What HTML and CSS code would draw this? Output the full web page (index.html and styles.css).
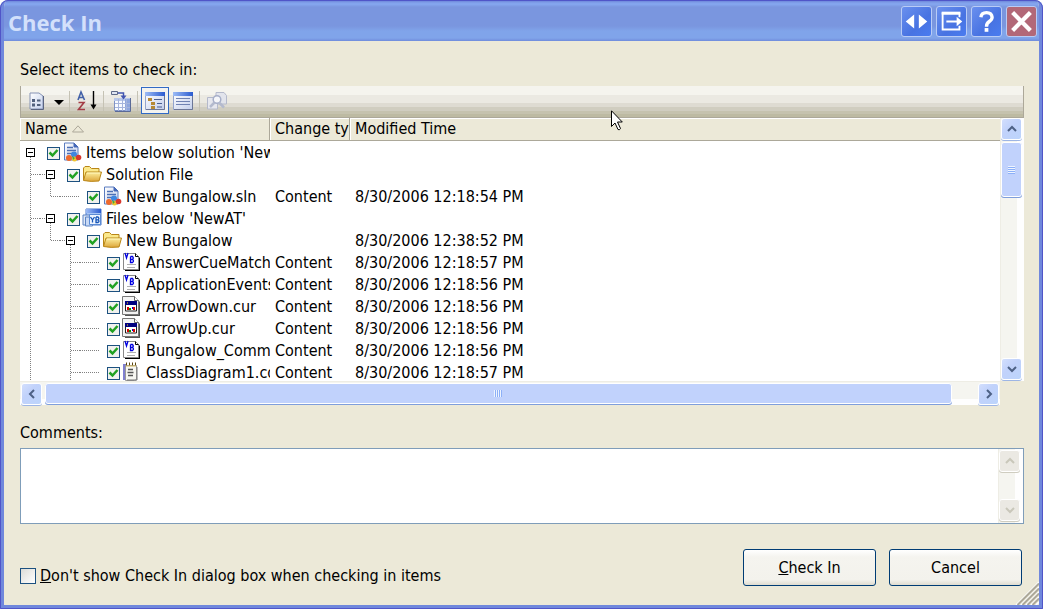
FILE: index.html
```html
<!DOCTYPE html>
<html lang="en">
<head>
<meta charset="utf-8">
<title>Check In</title>
<link rel="stylesheet" href="styles.css">
</head>
<body>
<svg class="sprite" aria-hidden="true">
  <defs>
    <linearGradient id="sheet" x1="0" y1="0" x2="1" y2="1"><stop offset="0" stop-color="#fff"/><stop offset="1" stop-color="#c3cfec"/></linearGradient>
    <linearGradient id="gold" x1="0" y1="0" x2="0" y2="1"><stop offset="0" stop-color="#fdf0a0"/><stop offset="1" stop-color="#dda63a"/></linearGradient>
    <linearGradient id="bluebar" x1="0" y1="0" x2="1" y2="0"><stop offset="0" stop-color="#9dbcf5"/><stop offset="1" stop-color="#2a5bd0"/></linearGradient>
    <symbol id="g-v" viewBox="0 0 20 22"><path class="dots" d="M10.5 0V22"/></symbol>
    <symbol id="g-tee" viewBox="0 0 20 22"><path class="dots" d="M10.5 0V22M11 11.5H20"/></symbol>
    <symbol id="g-elbow" viewBox="0 0 20 22"><path class="dots" d="M10.5 0V12M11 11.5H20"/></symbol>
    <symbol id="g-h" viewBox="0 0 20 22"><path class="dots" d="M0 11.5H20"/></symbol>
    <symbol id="g-root" viewBox="0 0 20 22"><path class="dots" d="M10.5 16V22"/><path d="M6.5 7.5h8v8h-8z" fill="#fff" stroke="#000"/><path d="M8 11.5h5" stroke="#000"/></symbol>
    <symbol id="g-open" viewBox="0 0 20 22"><path class="dots" d="M10.5 16V22M0 11.5H6"/><path d="M6.5 7.5h8v8h-8z" fill="#fff" stroke="#000"/><path d="M8 11.5h5" stroke="#000"/></symbol>
    <symbol id="i-solution" viewBox="0 0 20 20">
      <path d="M2.500 1H12l4 4v13H2.500z" fill="url(#sheet)" stroke="#5a7cc0"/><path d="M12 1v4h4z" fill="#4468b8" stroke="#4468b8"/>
      <path d="M5 5.500h6M5 8.500h9M5 11.500h6" stroke="#4c6fb5" stroke-width="1.500"/>
      <circle cx="12" cy="12.500" r="3" fill="#3f86e0"/><circle cx="7" cy="16" r="3" fill="#ef6a2c"/><circle cx="12.500" cy="17" r="2.500" fill="#f2c52d"/><circle cx="16.500" cy="15.500" r="2.800" fill="#d8382e"/><path d="M10 14l3 2-2 2z" fill="#45a743"/>
    </symbol>
    <symbol id="i-folder" viewBox="0 0 20 20"><path d="M1.500 16V4L3 2.500h4.500l2 2H17v4" fill="#fbe98c" stroke="#b98618"/><path d="M1.500 16.500L4 8h15.500l-2.500 9q-8 1-15.500-.5z" fill="url(#gold)" stroke="#b98618"/><path d="M5 9h13" stroke="#fff6bd"/></symbol>
    <symbol id="i-project" viewBox="0 0 20 20"><path d="M4 1h15v16H4z" fill="#a9c6f5" stroke="#4b79cc"/><path d="M4 1h15v4H4z" fill="url(#bluebar)"/><path d="M1 7h7v10H1z" fill="#e1e9f7" stroke="#5c84c4"/><path d="M3.500 9h7v9h-7z" fill="#c8d9f5" stroke="#5c84c4"/><path d="M7.500 6.500h11v10h-11z" fill="#eef5ff" stroke="#5a8ad4"/><path d="M8.500 9l2 3v2.500M12.500 9l-2 3M14 9v5.500h2q2-1.300 0-2.700h-2M16 11.800q1.700-1.400 0-2.800h-2" fill="none" stroke="#1756b8" stroke-width="1.300"/></symbol>
    <symbol id="i-vb" viewBox="0 0 20 20"><path d="M3 3h12l3 3v13H3z" fill="#000"/><path d="M1.500 1.500h12l3 3V17.500h-15z" fill="#fff" stroke="#888"/><path d="M13.500 1.500v3h3" fill="none" stroke="#000"/><path d="M3 1l1.500 5L6 1M8.500 4.500v6h2q2-1.500 0-3h-2M10.500 7.500q1.500-1.500 0-3h-2" fill="none" stroke="#0000e0" stroke-width="1.300"/><path d="M5 12.500h9M5 15.500h8" stroke="#b0b0b0"/></symbol>
    <symbol id="i-cur" viewBox="0 0 20 20"><path d="M3 3h12l3 3v14H3z" fill="#555"/><path d="M.5 .5h12l4 4V18.500H.5z" fill="#f4f4f4" stroke="#777"/><path d="M12.500 .5v4h4" fill="#fff" stroke="#666"/><path d="M3.500 5.500h11v9.500h-11z" fill="#fff" stroke="#222"/><path d="M3 5h12v4H3z" fill="#000080"/><path d="M5 7h1" stroke="#ffd800"/><path d="M5 11h2v3H5z" fill="#d00"/><path d="M7 12h2v2H7z" fill="#009000"/><path d="M11 11h2v3h-2z" fill="#d00"/><path d="M10 11h1v2h-1z" fill="#0000d0"/></symbol>
    <symbol id="i-note" viewBox="0 0 20 20"><path d="M1 2h3v16H1z" fill="#7f7fd0"/><path d="M3.500 3.500h11V17q0 1.500-2 1.500h-9z" fill="#f7f7f2" stroke="#999"/><path d="M15 5v13H5" fill="none" stroke="#777"/><path d="M4 2h1M7 2h1M10 2h1M13 2h1" stroke="#5c4710" stroke-width="3"/><path d="M4 4h10" stroke="#d9bd63"/><path d="M6 7.500h5M5.500 10.500h6M6 13.500h5" stroke="#555" stroke-width="1.400"/></symbol>
  </defs>
</svg>
<main class="dialog">
  <header class="titlebar">
    <h1 class="title">Check In</h1>
    <div class="window-buttons">
      <button class="win-btn" type="button" aria-label="Switch monitor"><svg viewBox="0 0 31 31"><path d="M13 8v15L4 15.500zM18 8l9 7.500-9 7.500z" fill="#fff"/></svg></button>
      <button class="win-btn" type="button" aria-label="Move out"><svg viewBox="0 0 31 31"><path d="M24 11V7H6v17h18v-4" fill="none" stroke="#fff" stroke-width="2"/><path d="M5 5h20v3H5z" fill="#fff"/><path d="M10 14.500h11v-4l6 5-6 5v-4H10z" fill="#fff"/></svg></button>
      <button class="win-btn" type="button" aria-label="Help"><svg viewBox="0 0 31 31"><path d="M9.500 11Q10 6 15.500 6T21.500 11Q21.500 13.500 18.500 15.500T15.500 21" fill="none" stroke="#fff" stroke-width="3.600"/><path d="M13.500 22.500h4v4h-4z" fill="#fff"/></svg></button>
      <button class="win-btn win-close" type="button" aria-label="Close"><svg viewBox="0 0 31 31"><path d="M6 6L25 25M25 6L6 25" stroke="#fff" stroke-width="4.500"/></svg></button>
    </div>
  </header>

  <div class="content">
    <h2 class="caption" id="list-caption">Select items to check in:</h2>

    <div class="toolbar" role="toolbar">
      <button class="tool" type="button" aria-label="Options"><svg viewBox="0 0 22 22"><path d="M4 3h9l4 3v13H4z" fill="url(#sheet)" stroke="#8592b4"/><path d="M17.500 6v13.500H5" fill="none" stroke="#5a6480"/><path d="M6 9h3v3H6zM6 13.500h3v3H6z" fill="#51607e"/><path d="M11 10.500h3.500M11 15h3.500" stroke="#51607e" stroke-width="2"/></svg></button>
      <button class="tool tool-drop" type="button" aria-label="More options"><svg viewBox="0 0 14 22"><path d="M2 10h10l-5 5z" fill="#000"/></svg></button>
      <span class="divider"></span>
      <button class="tool" type="button" aria-label="Sort"><svg viewBox="0 0 22 22"><path d="M2 10L5 2l3.500 8M3 7.500h4.500" fill="none" stroke="#4361a8" stroke-width="1.600"/><path d="M2.500 12.500H8L2.500 19.500H9" fill="none" stroke="#a33c45" stroke-width="1.600"/><path d="M17.500 1v16" stroke="#000" stroke-width="1.400"/><path d="M14.500 14.500h6l-3 5z" fill="#000"/></svg></button>
      <span class="divider"></span>
      <button class="tool" type="button" aria-label="Show columns"><svg viewBox="0 0 22 22"><path d="M4.500 8.500h15v12h-15z" fill="#f8faff" stroke="#7f92c4"/><path d="M4 8h16v3H4z" fill="#b9c8ea"/><path d="M15 9h5v12h-5z" fill="#8ea6dd"/><path d="M5 13.500h15M5 17.500h15M8.500 9v12M12.500 9v12M16.500 9v12" stroke="#a5b4dc"/><path d="M20.500 8v13.500H5" fill="none" stroke="#5a6a98"/><path d="M1.500 1.500h6v3h-6z" fill="#dfe5f2" stroke="#5f6a88"/><path d="M8 3h5.500v4" fill="none" stroke="#4255b0" stroke-width="1.500"/><path d="M10.500 5.500h6l-3 4z" fill="#4255b0"/></svg></button>
      <span class="divider"></span>
      <button class="tool tool-on" type="button" aria-label="Tree view" aria-pressed="true"><svg viewBox="0 0 22 22"><path d="M1.500 2.500h19v17h-19z" fill="url(#sheet)" stroke="#93a5ce"/><path d="M1 2h20v4H1z" fill="url(#bluebar)"/><path d="M4 8h4v3H4zM7 12h4v3H7zM7 16h4v3H7z" fill="#b68a35"/><path d="M10 9.500h8M13 13.500h5M13 17h5" stroke="#4a5f92"/><path d="M20.500 6v13.500H2" fill="none" stroke="#6c7797"/></svg></button>
      <button class="tool" type="button" aria-label="Flat view"><svg viewBox="0 0 22 22"><path d="M1.500 2.500h19v17h-19z" fill="url(#sheet)" stroke="#93a5ce"/><path d="M1 2h20v4H1z" fill="url(#bluebar)"/><path d="M4 8.500h14M4 11.500h14M4 14.500h14" stroke="#6f82b2"/><path d="M20.500 6v13.500H2" fill="none" stroke="#6c7797"/></svg></button>
      <span class="divider"></span>
      <button class="tool" type="button" aria-label="Compare" disabled><svg viewBox="0 0 22 22"><path d="M10 2.500h8l2.500 3V14H10z" fill="#e2e4ec" stroke="#b4b9cb"/><path d="M1.500 7.500h7l3 3V19h-10z" fill="#e6e7ee" stroke="#b4b9cb"/><circle cx="11" cy="9.500" r="3.800" fill="#f5f6fa" stroke="#a6aec8" stroke-width="1.500"/><path d="M8.500 12.500L4 17M13 12.500l5 5" stroke="#b4bace" stroke-width="2.500"/></svg></button>
    </div>

    <div class="list">
      <div class="list-top">
        <div class="list-view">
          <table class="items" aria-labelledby="list-caption">
            <colgroup><col class="col-name"><col class="col-change"><col></colgroup>
            <thead><tr><th>Name <svg class="sort" viewBox="0 0 12 8"><path d="M.5 7L6 .8l5.500 6.200z" fill="none" stroke="#aca899"/></svg></th><th>Change typ</th><th>Modified Time</th></tr></thead>
            <tbody>
              <tr><td><label class="node"><svg class="g"><use href="#g-root"/></svg><input class="tick" type="checkbox" checked><svg class="i"><use href="#i-solution"/></svg><span>Items below solution 'New</span></label></td><td></td><td></td></tr>
              <tr><td><label class="node"><svg class="g"><use href="#g-tee"/></svg><svg class="g"><use href="#g-open"/></svg><input class="tick" type="checkbox" checked><svg class="i"><use href="#i-folder"/></svg><span>Solution File</span></label></td><td></td><td></td></tr>
              <tr><td><label class="node"><svg class="g"><use href="#g-v"/></svg><svg class="g"><use href="#g-elbow"/></svg><svg class="g"><use href="#g-h"/></svg><input class="tick" type="checkbox" checked><svg class="i"><use href="#i-solution"/></svg><span>New Bungalow.sln</span></label></td><td>Content</td><td>8/30/2006 12:18:54 PM</td></tr>
              <tr><td><label class="node"><svg class="g"><use href="#g-tee"/></svg><svg class="g"><use href="#g-open"/></svg><input class="tick" type="checkbox" checked><svg class="i"><use href="#i-project"/></svg><span>Files below 'NewAT'</span></label></td><td></td><td></td></tr>
              <tr><td><label class="node"><svg class="g"><use href="#g-v"/></svg><svg class="g"><use href="#g-elbow"/></svg><svg class="g"><use href="#g-open"/></svg><input class="tick" type="checkbox" checked><svg class="i"><use href="#i-folder"/></svg><span>New Bungalow</span></label></td><td></td><td>8/30/2006 12:38:52 PM</td></tr>
              <tr><td><label class="node"><svg class="g"><use href="#g-v"/></svg><svg class="g"></svg><svg class="g"><use href="#g-tee"/></svg><svg class="g"><use href="#g-h"/></svg><input class="tick" type="checkbox" checked><svg class="i"><use href="#i-vb"/></svg><span>AnswerCueMatchi</span></label></td><td>Content</td><td>8/30/2006 12:18:57 PM</td></tr>
              <tr><td><label class="node"><svg class="g"><use href="#g-v"/></svg><svg class="g"></svg><svg class="g"><use href="#g-tee"/></svg><svg class="g"><use href="#g-h"/></svg><input class="tick" type="checkbox" checked><svg class="i"><use href="#i-vb"/></svg><span>ApplicationEvents</span></label></td><td>Content</td><td>8/30/2006 12:18:56 PM</td></tr>
              <tr><td><label class="node"><svg class="g"><use href="#g-v"/></svg><svg class="g"></svg><svg class="g"><use href="#g-tee"/></svg><svg class="g"><use href="#g-h"/></svg><input class="tick" type="checkbox" checked><svg class="i"><use href="#i-cur"/></svg><span>ArrowDown.cur</span></label></td><td>Content</td><td>8/30/2006 12:18:56 PM</td></tr>
              <tr><td><label class="node"><svg class="g"><use href="#g-v"/></svg><svg class="g"></svg><svg class="g"><use href="#g-tee"/></svg><svg class="g"><use href="#g-h"/></svg><input class="tick" type="checkbox" checked><svg class="i"><use href="#i-cur"/></svg><span>ArrowUp.cur</span></label></td><td>Content</td><td>8/30/2006 12:18:56 PM</td></tr>
              <tr><td><label class="node"><svg class="g"><use href="#g-v"/></svg><svg class="g"></svg><svg class="g"><use href="#g-tee"/></svg><svg class="g"><use href="#g-h"/></svg><input class="tick" type="checkbox" checked><svg class="i"><use href="#i-vb"/></svg><span>Bungalow_Comm</span></label></td><td>Content</td><td>8/30/2006 12:18:56 PM</td></tr>
              <tr><td><label class="node"><svg class="g"><use href="#g-v"/></svg><svg class="g"></svg><svg class="g"><use href="#g-tee"/></svg><svg class="g"><use href="#g-h"/></svg><input class="tick" type="checkbox" checked><svg class="i"><use href="#i-note"/></svg><span>ClassDiagram1.cd</span></label></td><td>Content</td><td>8/30/2006 12:18:57 PM</td></tr>
            </tbody>
          </table>
        </div>
        <div class="vbar">
          <button class="sb-btn" type="button" aria-label="Scroll up"><svg viewBox="0 0 12 12"><path d="M2 8l4-4 4 4"/></svg></button>
          <div class="vthumb"><span class="grip"></span></div>
          <button class="sb-btn sb-end" type="button" aria-label="Scroll down"><svg viewBox="0 0 12 12"><path d="M2 4l4 4 4-4"/></svg></button>
        </div>
      </div>
      <div class="hbar">
        <button class="sb-btn" type="button" aria-label="Scroll left"><svg viewBox="0 0 12 12"><path d="M8 2L4 6l4 4"/></svg></button>
        <div class="htrack"><div class="hthumb"><span class="grip grip-v"></span></div></div>
        <button class="sb-btn" type="button" aria-label="Scroll right"><svg viewBox="0 0 12 12"><path d="M4 2l4 4-4 4"/></svg></button>
      </div>
    </div>

    <label class="caption comments-label" for="comments">Comments:</label>
    <div class="comments">
      <textarea id="comments" class="comments-text"></textarea>
      <div class="vbar vbar-off">
        <button class="sb-btn" type="button" aria-label="Scroll up" disabled><svg viewBox="0 0 12 12"><path d="M2 8l4-4 4 4"/></svg></button>
        <button class="sb-btn sb-end" type="button" aria-label="Scroll down" disabled><svg viewBox="0 0 12 12"><path d="M2 4l4 4 4-4"/></svg></button>
      </div>
    </div>

    <footer class="footer">
      <label class="option"><input class="box" type="checkbox"><span><u>D</u>on't show Check In dialog box when checking in items</span></label>
      <button class="push" type="button"><u>C</u>heck In</button>
      <button class="push" type="button">Cancel</button>
    </footer>
  </div>
  <svg class="resize" viewBox="0 0 24 24"><path d="M1 24L24 1M6 24L24 6M11 24L24 11M16 24L24 16M21 24l3-3" stroke="#fff" stroke-width="1.500"/><path d="M2.500 24L24 2.500M7.500 24L24 7.500M12.500 24L24 12.500M17.500 24L24 17.500" stroke="#aca899" stroke-width="2"/></svg>
  <svg class="pointer" viewBox="0 0 12 21"><path d="M.5 .8V16.500L4 13l3 6.500q1.500 1 2.500-1L6.500 12h4.800z" fill="#fff" stroke="#000"/></svg>
</main>
</body>
</html>
```
FILE: styles.css
```css
* { box-sizing: border-box; }

body {
  margin: 0;
  background: #fff;
  color: #000;
  font: 16px/20px "DejaVu Sans Condensed", "Noto Sans", sans-serif;
}

button, textarea { font: inherit; color: inherit; }
button { padding: 0; margin: 0; }
svg { display: block; }
.sprite { position: absolute; width: 0; height: 0; }

.dialog {
  position: relative;
  display: flex;
  flex-direction: column;
  height: 100vh;
  min-height: 480px;
  border: 4px solid #7088dc;
  border-top: 0;
  border-radius: 8px 8px 0 0;
  background: #ece9d8;
  outline: 1px solid #5055c8;
  outline-offset: -1px;
  overflow: hidden;
}

.titlebar {
  flex: none;
  display: flex;
  align-items: center;
  justify-content: space-between;
  height: 41px;
  margin: 0 -3px;
  padding: 2px 5px 0 7px;
  background: linear-gradient(#5a70d0 0, #7b98e4 2px, #86a8f0 4px, #7a96df 7px, #7a96df 26px, #80a4ea 31px, #80a4ea 38px, #708cdc 41px);
}
.title { margin: 0; font: 700 22px/32px "Open Sans", "Noto Sans", sans-serif; color: #d3e0fb; }
.window-buttons { display: flex; gap: 4px; }
.win-btn {
  width: 31px;
  height: 31px;
  border: 1px solid #b9ccf6;
  border-radius: 3px;
  background: linear-gradient(135deg, #6a90ee, #4873e2 60%, #4a7cf0);
}
.win-btn svg { width: 29px; height: 29px; }
.win-close { background: #b26878; }

.content {
  flex: 1;
  display: flex;
  flex-direction: column;
  min-height: 0;
  padding: 19px 15px 19px 16px;
}
.caption { margin: 0; font-size: 16px; font-weight: normal; line-height: 20px; }

.toolbar {
  flex: none;
  display: flex;
  align-items: center;
  height: 32px;
  margin-top: 6px;
  padding: 0 2px 2px;
  border: solid #aca899;
  border-width: 0 1px 1px;
  background: linear-gradient(#f5f4ee 0 9px, #ebe9e2 9px 17px, #dedbd2 17px 21px, #d0cdc0 21px 25px, #c5c2ae 25px 28px, #bdbaa2 28px);
}
.tool { display: grid; place-items: center; width: 28px; height: 27px; border: 1px solid transparent; background: none; }
.tool svg { width: 22px; height: 22px; }
.tool-drop { width: 16px; }
.tool-drop svg { width: 14px; }
.tool-on { border-color: #316ac5; background: #f3f3f0; }
.divider { width: 1px; height: 20px; margin: 0 3px 0 2px; background: #c5c2b4; }

.list { flex: 1; display: flex; flex-direction: column; min-height: 0; }
.list-top { flex: 1; display: flex; min-height: 0; }
.list-view { flex: 1; min-width: 0; overflow: hidden; background: #fff; }
.items { width: 100%; table-layout: fixed; border-collapse: separate; border-spacing: 0; }
.col-name { width: 250px; }
.col-change { width: 80px; }
.items th {
  height: 23px;
  padding: 0 0 0 5px;
  border-right: 1px solid #aca899;
  border-bottom: 1px solid #aca899;
  background: #ece9d8;
  box-shadow: inset 1px 1px #fff;
  font-weight: normal;
  line-height: 22px;
  text-align: left;
  white-space: nowrap;
  overflow: hidden;
}
.items th:last-child { border-right: 0; }
.sort { display: inline-block; width: 12px; height: 8px; vertical-align: 1px; }
.items td { height: 22px; padding: 2px 0 0 5px; line-height: 20px; white-space: nowrap; overflow: hidden; }
.items td:first-child { padding: 0; }
.node { display: flex; align-items: center; height: 22px; }
.node span { padding-top: 2px; }
.g { flex: none; width: 20px; height: 22px; shape-rendering: crispEdges; }
.dots { stroke: #808080; stroke-dasharray: 1 1; }
.i { flex: none; width: 20px; height: 20px; margin: 0 4px 0 2px; }
.tick, .box { appearance: none; flex: none; margin: 0; border: 1px solid #1c5180; background: linear-gradient(135deg, #dcdcd7, #fff); }
.tick { width: 13px; height: 13px; margin: 2px 0 0 7px; }
.tick:checked, .box:checked {
  background: url("data:image/svg+xml,%3Csvg xmlns='http://www.w3.org/2000/svg' viewBox='0 0 11 11'%3E%3Cpath d='M1.500 4.500l3 3 5-5.500' fill='none' stroke='%2321a121' stroke-width='2.500'/%3E%3C/svg%3E") center / 11px no-repeat, #f1f1ee;
}

.vbar { flex: none; display: flex; flex-direction: column; width: 24px; padding: 0 2px 0 1px; background: linear-gradient(90deg, #eeede5 1px, #f5f5f0 1px 17px, #fefefe 17px); }
.sb-btn {
  flex: none;
  display: grid;
  place-items: center;
  width: 21px;
  height: 22px;
  border: 1px solid #fff;
  border-radius: 3px;
  background: linear-gradient(135deg, #d3dffd, #c1d2fb 40%, #bcd4fb);
  box-shadow: 0 1px #9db5e4;
}
.sb-btn svg { width: 12px; height: 12px; }
.sb-btn path { fill: none; stroke: #4d6185; stroke-width: 2; }
.sb-end { margin-top: auto; margin-bottom: 1px; }
.vthumb, .hthumb { display: grid; place-items: center; border: 1px solid #fff; border-radius: 3px; background: #c1d2fc; box-shadow: 0 1px #7f9edb; }
.vthumb { width: 21px; height: 55px; margin-top: 2px; }
.grip { width: 7px; height: 8px; background: repeating-linear-gradient(#eef4fe 0 1px, #8cb0f8 1px 2px); }
.grip-v { width: 8px; height: 7px; background: repeating-linear-gradient(90deg, #eef4fe 0 1px, #8cb0f8 1px 2px); }
.hbar { flex: none; display: flex; height: 24px; margin-right: 24px; padding: 1px 1px 0; border-top: 1px solid #eeede5; background: linear-gradient(#f5f5f0 17px, #fefefe 17px); }
.htrack { flex: 1; padding: 0 3px; }
.hthumb { width: 97.5%; height: 21px; }

.comments-label { flex: none; margin-top: 18px; }
.comments { flex: none; display: flex; height: 76px; margin-top: 5px; border: 1px solid #7f9db9; background: #fff; }
.comments-text { flex: 1; min-width: 0; border: 0; padding: 2px 4px; resize: none; overflow: hidden; background: #fff; outline: 0; }
.vbar-off { width: 25px; padding: 1px 2px 1px 1px; }
.vbar-off .sb-btn { background: #ebe9e3; box-shadow: 0 1px #cfcdc0; }
.vbar-off .sb-btn path { stroke: #c9c7ba; }

.footer { flex: none; display: flex; align-items: center; gap: 13px; margin-top: 24px; padding-right: 2px; }
.option { flex: 1; display: flex; align-items: center; gap: 4px; margin-top: 18px; white-space: nowrap; }
.box { width: 16px; height: 16px; }
.push {
  width: 133px;
  height: 37px;
  padding-top: 1px;
  border: 1px solid #003c74;
  border-radius: 3px;
  background: linear-gradient(#fff, #f5f4ef 20%, #f3f2ec 85%, #dfdcd0);
}

.resize { position: absolute; right: 0; bottom: 0; width: 24px; height: 24px; }
.pointer { position: absolute; left: 607px; top: 110px; width: 12px; height: 21px; }
```
